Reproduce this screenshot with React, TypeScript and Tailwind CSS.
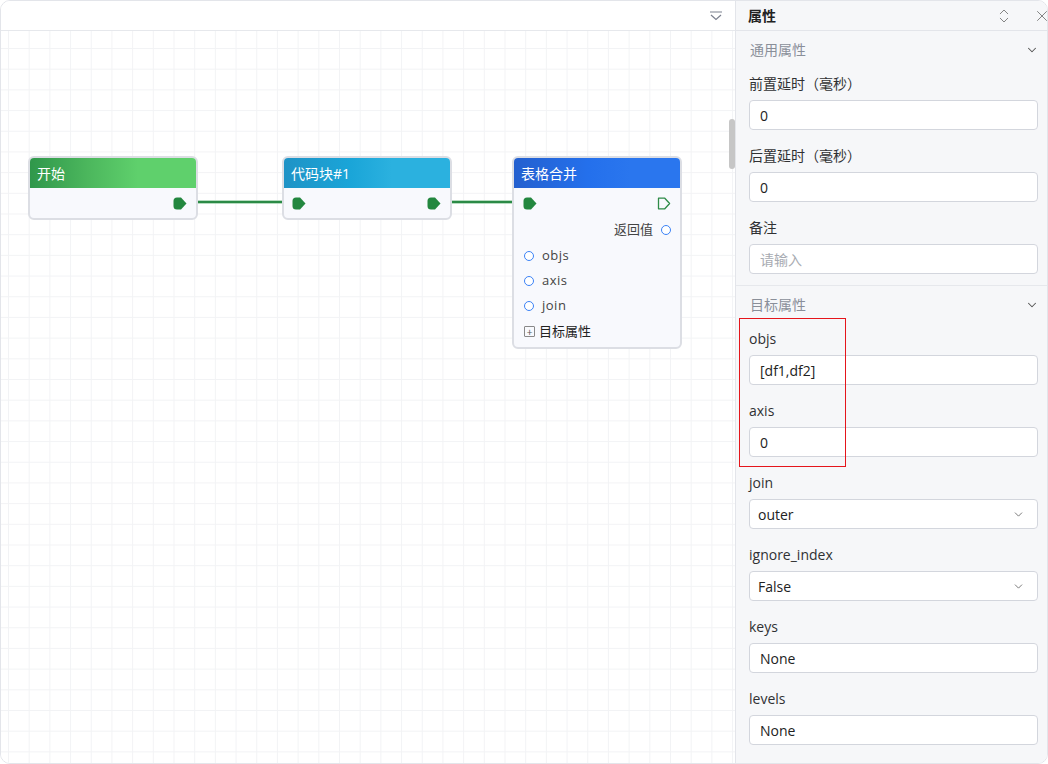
import { ChevronDown, ChevronsUpDown, X } from 'lucide-react';

type Field = { label: string; value?: string; placeholder?: string; select?: boolean };

const commonFields: Field[] = [
  { label: '前置延时（毫秒）', value: '0' },
  { label: '后置延时（毫秒）', value: '0' },
  { label: '备注', placeholder: '请输入' },
];

const targetFields: Field[] = [
  { label: 'objs', value: '[df1,df2]' },
  { label: 'axis', value: '0' },
  { label: 'join', value: 'outer', select: true },
  { label: 'ignore_index', value: 'False', select: true },
  { label: 'keys', value: 'None' },
  { label: 'levels', value: 'None' },
];

function PortFilled() {
  return (
    <svg width="14" height="13" viewBox="0 0 14 13">
      <path d="M4 0.5 H8 L13.5 6.5 L8 12.5 H4 Q0.5 12.5 0.5 9 V4 Q0.5 0.5 4 0.5 Z" fill="#23873f" />
    </svg>
  );
}

function PortHollow() {
  return (
    <svg width="14" height="13" viewBox="0 0 14 13">
      <path d="M1.5 1.2 H7.8 L12.6 6.5 L7.8 11.8 H1.5 Z" fill="none" stroke="#2e8b48" strokeWidth="1.3" strokeLinejoin="round" />
    </svg>
  );
}

function Dot() {
  return <span className="inline-block w-[10px] h-[10px] rounded-full border-[1.5px] border-[#3b82f6] bg-white" />;
}

function FieldRow({ f }: { f: Field }) {
  return (
    <div>
      <div className="h-[22px] leading-[22px] text-[14px] text-[#303133] mb-[5px]">{f.label}</div>
      <div className="h-[30px] bg-white border border-[#d3d6dd] rounded-[4px] flex items-center justify-between pl-[10px] pr-[12px] text-[14px]">
        {f.placeholder ? (
          <span className="text-[#a8abb2]">{f.placeholder}</span>
        ) : (
          <span className={`text-[#222] ${f.select ? '-ml-[2px]' : ''}`}>{f.value}</span>
        )}
        {f.select && <ChevronDown size={13} className="text-[#666]" strokeWidth={1.6} />}
      </div>
    </div>
  );
}

function Section({ title, fields }: { title: string; fields: Field[] }) {
  return (
    <div className="border-b border-[#e6e8ec] last:border-0">
      <div className="h-[37px] flex items-center justify-between pl-[14px] pr-[8px] text-[14px] text-[#8a8f99]">
        <span>{title}</span>
        <ChevronDown size={14} className="text-[#555]" strokeWidth={1.8} />
      </div>
      <div className="flex flex-col gap-[15px] pt-[5px] pb-[11px] pl-[13px] pr-[9px]">
        {fields.map(f => (
          <FieldRow key={f.label} f={f} />
        ))}
      </div>
    </div>
  );
}

export default function App() {
  return (
    <div className="w-[1048px] h-[764px] font-['Open_Sans','Noto_Sans_CJK_SC',sans-serif] relative">
      <div className="w-full h-full flex border border-[#e3e5ea] rounded-[10px] overflow-hidden bg-white">
        {/* Canvas */}
        <div className="w-[735px] shrink-0 flex flex-col border-r border-[#e3e5ea]">
          <div className="h-[30px] border-b border-[#e6e8ec] bg-white flex items-center justify-end pr-[12px]">
            <svg width="14" height="10" viewBox="0 0 14 10">
              <line x1="1" y1="1" x2="13" y2="1" stroke="#7c8190" strokeWidth="1.2" />
              <polyline points="2,4 7,8.5 12,4" fill="none" stroke="#7c8190" strokeWidth="1.2" />
            </svg>
          </div>
          <div className="flex-1 relative overflow-hidden bg-white bg-[linear-gradient(to_right,#f2f3f5_1px,transparent_1px),linear-gradient(to_bottom,#f2f3f5_1px,transparent_1px)] bg-[size:20.7px_20.7px] bg-[position:7px_17px]">
            {/* edges */}
            <svg className="absolute left-0 top-0" width="735" height="733">
              <line x1="185" y1="171" x2="294" y2="171" stroke="#9fd0ab" strokeWidth="3.5" />
              <line x1="185" y1="171" x2="294" y2="171" stroke="#2b8a46" strokeWidth="2" />
              <line x1="438" y1="171" x2="524" y2="171" stroke="#9fd0ab" strokeWidth="3.5" />
              <line x1="438" y1="171" x2="524" y2="171" stroke="#2b8a46" strokeWidth="2" />
            </svg>

            {/* 开始 */}
            <div className="absolute left-[27px] top-[125px] w-[170px] h-[64px] border-2 border-[#dcdee4] rounded-[6px] bg-[#f8f9fd] overflow-hidden">
              <div className="h-[30px] flex items-center pl-[7px] text-[14px] text-white bg-[linear-gradient(90deg,#2f974b_0%,#4cb75d_35%,#5fd06c_65%)]">开始</div>
              <div className="h-[30px] flex items-center justify-end pr-[9px]">
                <PortFilled />
              </div>
            </div>

            {/* 代码块#1 */}
            <div className="absolute left-[281px] top-[125px] w-[170px] h-[64px] border-2 border-[#dcdee4] rounded-[6px] bg-[#f8f9fd] overflow-hidden">
              <div className="h-[30px] flex items-center pl-[7px] text-[14px] text-white bg-[linear-gradient(90deg,#1f93c6_0%,#1aa5d8_40%,#2bb1df_65%)]">代码块#1</div>
              <div className="h-[30px] flex items-center justify-between pl-[8px] pr-[9px]">
                <PortFilled />
                <PortFilled />
              </div>
            </div>

            {/* 表格合并 */}
            <div className="absolute left-[511px] top-[125px] w-[170px] h-[193px] border-2 border-[#dcdee4] rounded-[6px] bg-[#f8f9fd] overflow-hidden">
              <div className="h-[30px] flex items-center pl-[7px] text-[14px] text-white bg-[linear-gradient(90deg,#2460cf_0%,#2470ec_45%,#2a76ee_70%)]">表格合并</div>
              <div className="h-[30px] flex items-center justify-between pl-[9px] pr-[9px]">
                <PortFilled />
                <PortHollow />
              </div>
              <div className="h-[26px] -mt-[1px] flex items-center justify-end gap-[8px] pr-[9px] text-[13px] text-[#444]">
                <span>返回值</span>
                <Dot />
              </div>
              {['objs', 'axis', 'join'].map(n => (
                <div key={n} className="h-[25px] flex items-center gap-[8px] pl-[10px] text-[13px] text-[#444] tracking-[0.5px]">
                  <Dot />
                  <span>{n}</span>
                </div>
              ))}
              <div className="h-[27px] flex items-center gap-[4px] pl-[10px] text-[13px] text-[#222]">
                <span className="w-[11px] h-[11px] border border-[#888] rounded-[1px] flex items-center justify-center text-[10px] leading-none text-[#555]">+</span>
                <span>目标属性</span>
              </div>
            </div>

            {/* scrollbar */}
            <div className="absolute right-[0px] top-[88px] w-[6px] h-[50px] rounded-[3px] bg-[#c6c6c6]" />
          </div>
        </div>

        {/* Properties panel */}
        <div className="flex-1 bg-[#f6f7f9] flex flex-col relative">
          <div className="h-[30px] shrink-0 border-b border-[#e3e5ea] flex items-center pl-[12px] relative">
            <span className="text-[14px] font-bold text-[#222]">属性</span>
            <ChevronsUpDown size={18} strokeWidth={1.2} className="absolute left-[259px] top-[6px] text-[#777]" />
            <X size={18} strokeWidth={1.2} className="absolute left-[297px] top-[6px] text-[#777]" />
          </div>
          <Section title="通用属性" fields={commonFields} />
          <Section title="目标属性" fields={targetFields} />
        </div>
      </div>

      {/* annotation box */}
      <div className="absolute left-[739px] top-[318px] w-[107px] h-[149px] border border-[#e5151b]" />
    </div>
  );
}
